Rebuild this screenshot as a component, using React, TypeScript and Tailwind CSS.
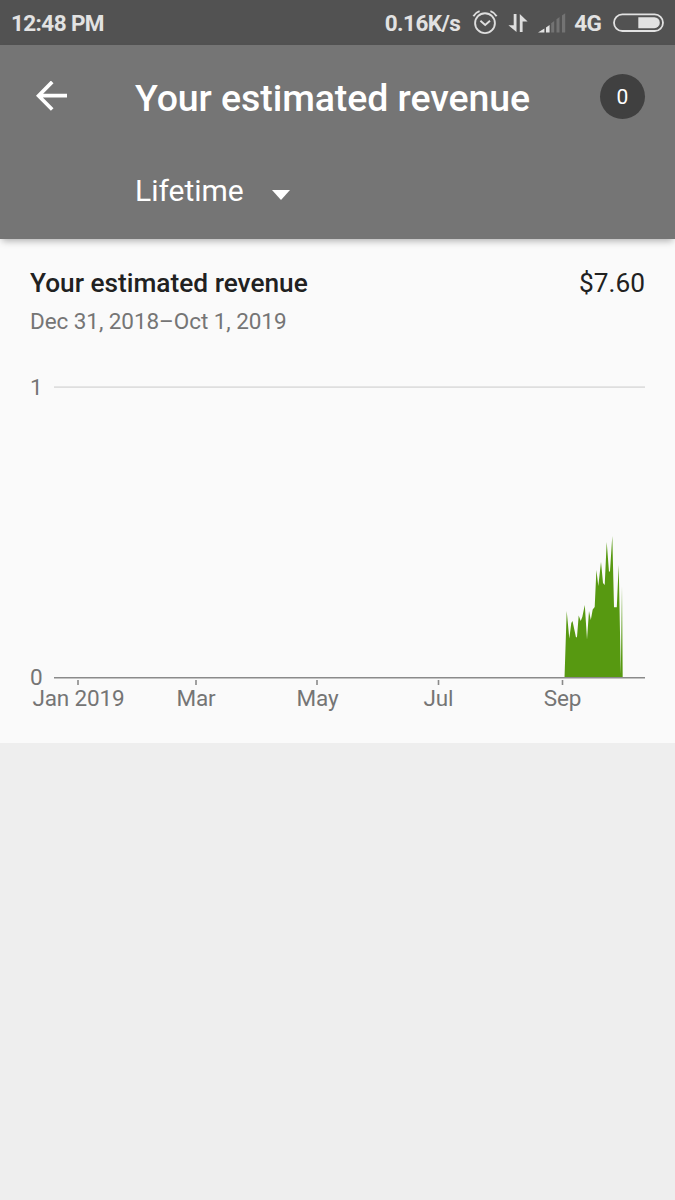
interface AxisTick {
  label: string;
  x: number;
  labelX: number;
}

const ticks: AxisTick[] = [
  { label: 'Jan 2019', x: 78, labelX: 78.5 },
  { label: 'Mar', x: 196, labelX: 196 },
  { label: 'May', x: 317, labelX: 317.5 },
  { label: 'Jul', x: 438.5, labelX: 438.5 },
  { label: 'Sep', x: 562.5, labelX: 562.5 },
];

// [x, y] in chart space, the baseline is y = 328
const revenue = [
  [564.5, 328], [566.7, 261], [569.3, 288.5], [571.3, 273], [572.5, 271], [576, 287.5],
  [577, 287], [578.7, 265.5], [580.7, 271], [582.3, 267], [584.8, 255], [587, 289.5],
  [589, 261], [590.8, 270], [592.7, 259.5], [594.7, 257], [596.4, 220], [598.3, 236],
  [601, 212], [603, 233], [604.7, 235], [606.7, 192], [609, 222], [610, 221],
  [612.3, 186], [614, 257.3], [616.8, 257.3], [618.7, 215], [620.8, 324], [622, 236],
  [622.7, 328],
];

function StatusBar() {
  return (
    <div className="flex h-[45px] items-center bg-[#525252] pr-[11px] pl-[11px] text-[22.5px] font-bold text-[#e2e2e2]">
      <span className="flex-1 pt-0.5 tracking-[-0.6px]">12:48 PM</span>
      <span className="pt-0.5 tracking-[-0.55px]">0.16K/s</span>
      <AlarmIcon />
      <DataIcon />
      <SignalIcon />
      <span className="ml-2 pt-0.5 tracking-[-0.8px]">4G</span>
      <BatteryIcon />
    </div>
  );
}

function AlarmIcon() {
  return (
    <svg className="ml-3 h-[25px] w-[26px]" viewBox="0 0 26 25" fill="none" stroke="#dedede" strokeWidth="1.9">
      <circle cx="13" cy="13.2" r="9.9" />
      <path d="M8.4 10.8l4.8 4.2 4.8-4.2" />
      <path d="M1.4 6.2Q3.4 2.6 7.6 1.2M24.6 6.2Q22.6 2.6 18.4 1.2" />
    </svg>
  );
}

function DataIcon() {
  return (
    <svg className="ml-2.5 h-[20px] w-[20px]" viewBox="0 0 20 20" fill="#dedede">
      <path d="M5.7 1h2.8v18L0.4 12.2h5.3z" />
      <path d="M11.8 19V1L19.6 8.4H14.6V19z" />
    </svg>
  );
}

function SignalIcon() {
  return (
    <svg className="ml-2.5 h-[20px] w-[28px]" viewBox="0 0 28 20">
      <path d="M0 19.5l6.4-4V19.5zM8 14.6l3.6-2.6v7.5H8z" fill="#e2e2e2" />
      <path d="M13.2 10.3l3-2.2v11.4h-3zM18.5 6.3l3-2.2v15.4h-3zM24 2.6l3.2-2.4v19.3H24z" fill="#737373" />
    </svg>
  );
}

function BatteryIcon() {
  return (
    <svg className="ml-3 h-[20px] w-[51px]" viewBox="0 0 51 20">
      <rect x="1" y="1.4" width="49" height="16.6" rx="8.3" fill="none" stroke="#e2e2e2" strokeWidth="1.8" />
      <path d="M25.3 4.2h16a5.5 5.5 0 0 1 0 11H25.3z" fill="#e2e2e2" />
    </svg>
  );
}

function Header() {
  return (
    <header className="relative z-10 h-[194px] bg-[#757575] text-white shadow-[0_4px_7px_-2px_rgba(0,0,0,0.3)]">
      <div className="flex h-[103px] items-center pr-[30px] pl-[36px]">
        <button aria-label="Back" className="mr-[68px]">
          <svg className="h-[31px] w-[31px]" viewBox="0 0 31 31" fill="none" stroke="#fff" strokeWidth="3.7">
            <path d="M31 14.7H3M16.2 0.9L2.6 14.7l13.6 13.8" />
          </svg>
        </button>
        <h1 className="flex-1 pt-1 text-[37.5px] font-medium tracking-[-0.08px] whitespace-nowrap">
          Your estimated revenue
        </h1>
        <span className="flex h-[45px] w-[45px] items-center justify-center rounded-full bg-[#404040] pt-[3px] text-[21px]">
          0
        </span>
      </div>
      <div className="flex items-center pt-px pl-[135px]">
        <span className="text-[30px] leading-[84px]">Lifetime</span>
        <svg className="mt-[7px] ml-[28px] h-[10px] w-[18px]" viewBox="0 0 18 10" fill="#fff">
          <path d="M0 0h18L9 10z" />
        </svg>
      </div>
    </header>
  );
}

function RevenueChart() {
  return (
    <svg className="block h-[393px] w-[675px] text-[22.5px]" viewBox="0 0 675 393" fill="#757575">
      <path d="M54 37.2H645" stroke="#dedede" strokeWidth="1.8" />
      <polygon points={revenue.map((p) => p.join(',')).join(' ')} fill="#579911" />
      <path d="M54 327.8H645" stroke="#8a8a8a" strokeWidth="1.6" />
      <text x="30" y="45">1</text>
      <text x="30" y="335">0</text>
      {ticks.map((tick) => (
        <g key={tick.label}>
          <path d={`M${tick.x} 330V335`} stroke="#8a8a8a" strokeWidth="1.6" />
          <text x={tick.labelX} y="356" textAnchor="middle" letterSpacing="-0.15">{tick.label}</text>
        </g>
      ))}
    </svg>
  );
}

export default function App() {
  return (
    <div className="h-[1200px] w-[675px] overflow-hidden bg-[#eeeeee] font-['Roboto',sans-serif]">
      <StatusBar />
      <Header />
      <main className="bg-[#fafafa]">
        <div className="flex h-[111px] items-start justify-between px-[30px] pt-[24px]">
          <div>
            <h2 className="text-[26.25px] leading-[40px] font-medium text-[#212121]">Your estimated revenue</h2>
            <p className="text-[22.5px] leading-[37px] tracking-[-0.07px] text-[#757575]">Dec 31, 2018–Oct 1, 2019</p>
          </div>
          <span className="text-[26.25px] leading-[40px] text-[#212121]">$7.60</span>
        </div>
        <RevenueChart />
      </main>
    </div>
  );
}
